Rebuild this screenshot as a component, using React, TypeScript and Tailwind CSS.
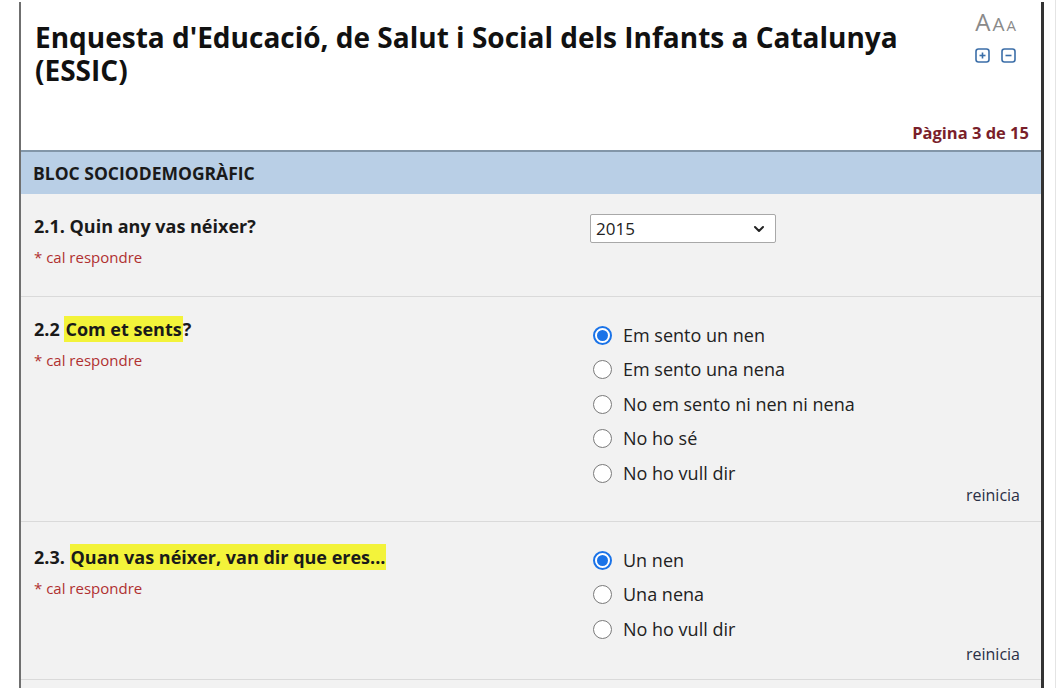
import { ChevronDown } from "lucide-react";

const font = { fontFamily: '"Open Sans", "Noto Sans", sans-serif' };

function Radio({ checked }: { checked?: boolean }) {
  if (checked) {
    return (
      <span className="w-[19px] h-[19px] rounded-full border-[2px] border-[#1a73e8] bg-white flex items-center justify-center flex-shrink-0">
        <span className="w-[11px] h-[11px] rounded-full bg-[#1a73e8]" />
      </span>
    );
  }
  return <span className="w-[19px] h-[19px] rounded-full border-[1.5px] border-[#7a7a7a] bg-white flex-shrink-0" />;
}

function Options({ items, selected }: { items: string[]; selected: number }) {
  return (
    <div className="flex flex-col">
      {items.map((label, i) => (
        <label key={label} className="h-[34.5px] flex items-center gap-[11px] pl-[3px] text-[18px] text-[#222]">
          <Radio checked={i === selected} />
          <span>{label}</span>
        </label>
      ))}
    </div>
  );
}

function Required() {
  return <p className="text-[15px] text-[#b03030] mt-[8px]">* cal respondre</p>;
}

function SizeBox({ minus }: { minus?: boolean }) {
  return (
    <svg width="15" height="15" viewBox="0 0 15 15" fill="none" stroke="#3b6ea8" strokeWidth="1.6">
      <rect x="1" y="1" width="13" height="13" rx="2.5" />
      <line x1="4.5" y1="7.5" x2="10.5" y2="7.5" />
      {!minus && <line x1="7.5" y1="4.5" x2="7.5" y2="10.5" />}
    </svg>
  );
}

export default function App() {
  return (
    <div className="w-[1060px] h-[688px] overflow-hidden bg-white flex" style={font}>
      <div className="ml-[19px] mt-[2px] w-[1025px] border-l-2 border-[#6f6f6f] border-r-[3px] border-r-[#333] flex flex-col">
        {/* Header */}
        <div className="h-[148px] bg-white flex flex-col">
          <div className="flex justify-between">
            <h1 className="pl-[14px] pt-[19px] text-[28px] leading-[33px] font-bold text-[#111] w-[910px]">
              Enquesta d'Educació, de Salut i Social dels Infants a Catalunya (ESSIC)
            </h1>
            <div className="pr-[25px] pt-[8px] flex flex-col items-end">
              <div className="flex items-baseline gap-[2px] text-[#8a8a8a] leading-none">
                <span className="text-[24px]">A</span>
                <span className="text-[19px]">A</span>
                <span className="text-[15px]">A</span>
              </div>
              <div className="flex gap-[11px] mt-[14px]">
                <SizeBox />
                <SizeBox minus />
              </div>
            </div>
          </div>
          <div className="mt-auto pb-[4px] pr-[12px] text-right text-[16.5px] font-bold text-[#7a1f2b]">
            Pàgina 3 de 15
          </div>
        </div>

        {/* Block title */}
        <div className="h-[44px] border-t-2 border-[#8296a8] bg-[#b9cfe6] flex items-center pl-[12px]">
          <h2 className="text-[17.5px] font-bold text-[#1a1a1a]">BLOC SOCIODEMOGRÀFIC</h2>
        </div>

        <div className="flex-1 bg-[#f2f2f2] flex flex-col">
          {/* 2.1 */}
          <div className="h-[103px] border-b border-[#dadada] flex pl-[13px]">
            <div className="w-[556px] pt-[20px]">
              <p className="text-[18px] font-bold text-[#1a1a1a] leading-[24px]">2.1. Quin any vas néixer?</p>
              <Required />
            </div>
            <div className="pt-[20px]">
              <div className="relative w-[186px] h-[29px] bg-white border border-[#a8a8a8] rounded-[2px] flex items-center pl-[5px] text-[17px] text-[#222]">
                2015
                <ChevronDown size={16} strokeWidth={3} className="absolute right-[8px] top-[6px] text-[#222]" />
              </div>
            </div>
          </div>

          {/* 2.2 */}
          <div className="h-[225px] border-b border-[#dadada] flex pl-[13px] pr-[21px]">
            <div className="w-[556px] pt-[20px]">
              <p className="text-[18px] font-bold text-[#1a1a1a] leading-[24px]">
                2.2 <span className="bg-[#f3f33a] px-[1px] py-[1px]">Com et sents</span>?
              </p>
              <Required />
            </div>
            <div className="flex-1 pt-[21px] flex flex-col">
              <Options
                items={["Em sento un nen", "Em sento una nena", "No em sento ni nen ni nena", "No ho sé", "No ho vull dir"]}
                selected={0}
              />
              <div className="text-right text-[16px] text-[#2a2f45] -mt-[8px]">reinicia</div>
            </div>
          </div>

          {/* 2.3 */}
          <div className="h-[158px] border-b border-[#dadada] flex pl-[13px] pr-[21px]">
            <div className="w-[556px] pt-[23px]">
              <p className="text-[18px] font-bold text-[#1a1a1a] leading-[24px]">
                2.3. <span className="bg-[#f3f33a] px-[1px] py-[1px]">Quan vas néixer, van dir que eres...</span>
              </p>
              <Required />
            </div>
            <div className="flex-1 pt-[21px] flex flex-col">
              <Options items={["Un nen", "Una nena", "No ho vull dir"]} selected={0} />
              <div className="text-right text-[16px] text-[#2a2f45] -mt-[5px]">reinicia</div>
            </div>
          </div>
        </div>
      </div>
      <div className="ml-[11px] w-px bg-[#e4e4e4]" />
    </div>
  );
}
